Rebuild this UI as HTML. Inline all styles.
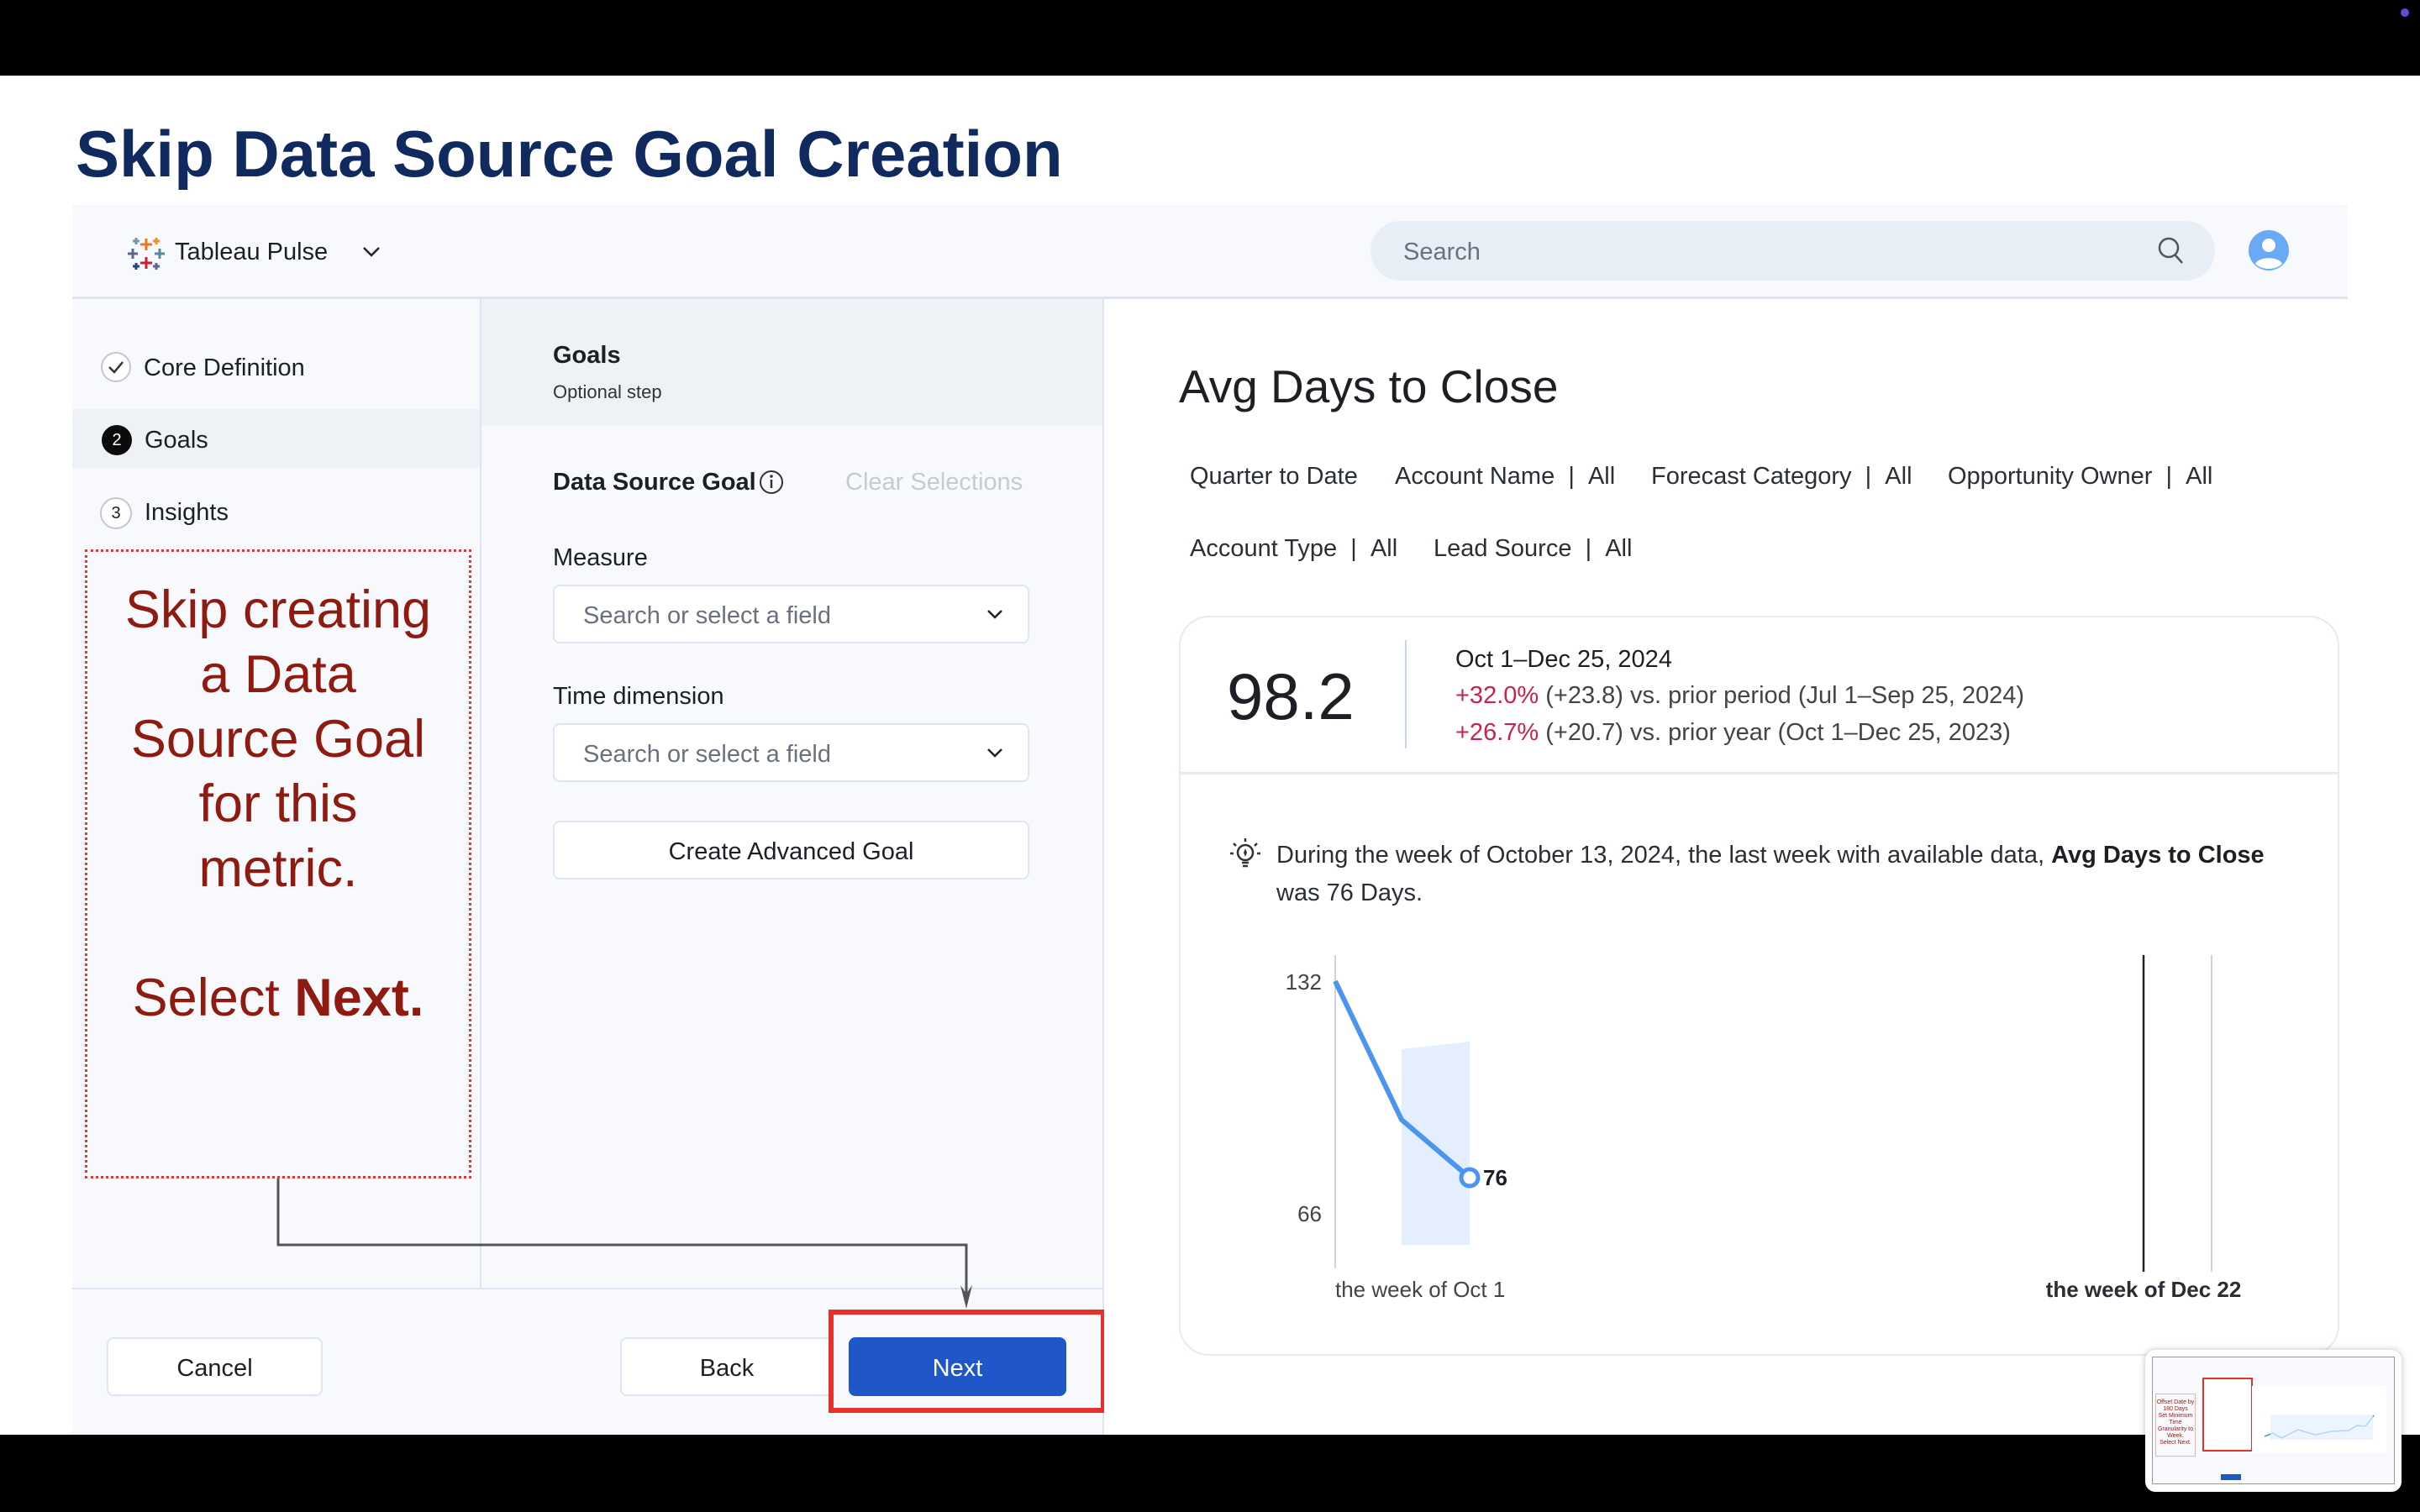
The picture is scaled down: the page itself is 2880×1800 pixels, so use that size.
<!DOCTYPE html>
<html><head><meta charset="utf-8"><style>
*{margin:0;padding:0;box-sizing:border-box}
body{width:2880px;height:1800px;background:#fff;position:relative;overflow:hidden;font-family:"Liberation Sans",sans-serif;color:#1c1f24}
.a{position:absolute;white-space:nowrap}
.btn{position:absolute;background:#fff;border:2px solid #dfe6f2;border-radius:8px;font-size:29px;display:flex;align-items:center;justify-content:center;color:#1c1f24;padding-top:4px}
.sel{position:absolute;left:658px;width:567px;height:70px;background:#fff;border:2px solid #dfe6f2;border-radius:8px;font-size:29px;color:#6b717c;padding-left:34px;line-height:70px}
.f{font-size:29px;color:#2a2e35}
</style></head><body>
<div class="a" style="left:0;top:0;width:2880px;height:90px;background:#000"></div>
<div class="a" style="left:2857px;top:10px;width:10px;height:10px;border-radius:50%;background:#5b4fd8"></div>
<div class="a" style="left:0;top:1708px;width:2880px;height:92px;background:#000"></div>
<div class="a" style="left:90px;top:138px;font-size:78px;font-weight:bold;color:#10295e">Skip Data Source Goal Creation</div>

<div class="a" style="left:86px;top:244px;width:2708px;height:1464px;background:#f8f9fd"></div>
<div class="a" style="left:86px;top:353px;width:2708px;height:3px;background:#dbe5f3"></div>
<svg class="a" style="left:152px;top:280px" width="44" height="44" viewBox="0 0 44 44">
<g stroke-width="3"><path d="M22 4v14M15 11h14" stroke="#e8762d"/><path d="M22 26v14M15 33h14" stroke="#c72037"/><path d="M6 16v12M0 22h12" stroke="#5b6591"/><path d="M38 16v12M32 22h12" stroke="#59879b"/><path d="M10 3v8M6 7h8" stroke="#7199a6"/><path d="M34 33v8M30 37h8" stroke="#5b6591"/><path d="M34 3v8M30 7h8" stroke="#eb912b"/><path d="M10 33v8M6 37h8" stroke="#1f457e"/></g></svg>
<div class="a" style="left:208px;top:284px;font-size:29px">Tableau Pulse</div>
<svg class="a" style="left:430px;top:290px" width="24" height="20"><path d="M3 5l9 9 9-9" fill="none" stroke="#222" stroke-width="2.5"/></svg>
<div class="a" style="left:1631px;top:263px;width:1005px;height:71px;border-radius:36px;background:#e8eef6"></div>
<div class="a" style="left:1670px;top:284px;font-size:29px;color:#6b717c">Search</div>
<svg class="a" style="left:2566px;top:280px" width="36" height="38"><circle cx="15" cy="15" r="11" fill="none" stroke="#555" stroke-width="2.5"/><path d="M23 24l8 9" stroke="#555" stroke-width="2.5"/></svg>
<svg class="a" style="left:2676px;top:274px" width="48" height="48"><circle cx="24" cy="24" r="24" fill="#6aa9f5"/><circle cx="24" cy="18" r="8" fill="#fff"/><path d="M8 40c4-9 28-9 32 0c-8 8-24 8-32 0z" fill="#fff"/></svg>

<div class="a" style="left:86px;top:487px;width:485px;height:70px;background:#eef1f6"></div>
<svg class="a" style="left:119px;top:418px" width="38" height="38"><circle cx="19" cy="19" r="17" fill="#fff" stroke="#c3c7cf" stroke-width="2"/><path d="M11 19l6 6 10-12" fill="none" stroke="#333" stroke-width="2.5"/></svg>
<div class="a" style="left:171px;top:422px;font-size:29px">Core Definition</div>
<div class="a" style="left:121px;top:506px;width:36px;height:36px;border-radius:50%;background:#0b0b0b;color:#fff;font-size:20px;text-align:center;line-height:36px">2</div>
<div class="a" style="left:172px;top:508px;font-size:29px">Goals</div>
<div class="a" style="left:119px;top:592px;width:38px;height:38px;border-radius:50%;border:2px solid #c3c7cf;background:#fff;font-size:20px;text-align:center;line-height:34px">3</div>
<div class="a" style="left:172px;top:594px;font-size:29px">Insights</div>
<div class="a" style="left:101px;top:654px;width:460px;height:749px;border:3px dotted #e03a2f"></div>
<div class="a" style="left:101px;top:688px;width:460px;text-align:center;font-size:63px;line-height:77px;color:#8e1a10;white-space:normal">Skip creating<br>a Data<br>Source Goal<br>for this<br>metric.<br><br>Select <b>Next.</b></div>

<div class="a" style="left:571px;top:355px;width:2px;height:1179px;background:#dbe5f3"></div>
<div class="a" style="left:1312px;top:355px;width:2px;height:1353px;background:#dbe5f3"></div>
<div class="a" style="left:573px;top:356px;width:739px;height:151px;background:#eef1f6"></div>
<div class="a" style="left:658px;top:407px;font-size:29px;font-weight:bold">Goals</div>
<div class="a" style="left:658px;top:454px;font-size:22px;color:#333">Optional step</div>
<div class="a" style="left:658px;top:558px;font-size:29px;font-weight:bold">Data Source Goal</div>
<svg class="a" style="left:902px;top:558px" width="32" height="32"><circle cx="16" cy="16" r="13" fill="none" stroke="#333" stroke-width="2"/><path d="M16 13v10" stroke="#333" stroke-width="2.5"/><circle cx="16" cy="9" r="1.8" fill="#333"/></svg>
<div class="a" style="left:1006px;top:558px;font-size:29px;color:#c5cad3">Clear Selections</div>
<div class="a" style="left:658px;top:648px;font-size:29px">Measure</div>
<div class="sel" style="top:696px">Search or select a field</div>
<svg class="a" style="left:1172px;top:722px" width="24" height="20"><path d="M4 5l8 8 8-8" fill="none" stroke="#222" stroke-width="2.5"/></svg>
<div class="a" style="left:658px;top:813px;font-size:29px">Time dimension</div>
<div class="sel" style="top:861px">Search or select a field</div>
<svg class="a" style="left:1172px;top:887px" width="24" height="20"><path d="M4 5l8 8 8-8" fill="none" stroke="#222" stroke-width="2.5"/></svg>
<div class="btn" style="left:658px;top:977px;width:567px;height:70px">Create Advanced Goal</div>

<div class="a" style="left:86px;top:1533px;width:1227px;height:2px;background:#dbe5f3"></div>
<div class="btn" style="left:127px;top:1592px;width:257px;height:70px">Cancel</div>
<div class="btn" style="left:738px;top:1592px;width:254px;height:70px">Back</div>
<div class="btn" style="left:1010px;top:1592px;width:259px;height:70px;background:#1f57c8;border-color:#1f57c8;color:#fff">Next</div>
<div class="a" style="left:986px;top:1559px;width:330px;height:123px;border:6px solid #e6302a"></div>
<svg class="a" style="left:0;top:0" width="1400" height="1600"><path d="M331 1403V1482H1150V1552" fill="none" stroke="#555" stroke-width="3"/><path d="M1143 1530L1150 1558L1157 1530L1150 1540z" fill="#555"/></svg>

<div class="a" style="left:1314px;top:356px;width:1480px;height:1352px;background:#fff"></div>
<div class="a" style="left:1403px;top:428px;font-size:55px;color:#1c1f24">Avg Days to Close</div>
<div class="a f" style="left:1416px;top:551px">Quarter to Date</div>
<div class="a f" style="left:1660px;top:551px">Account Name &nbsp;| &nbsp;All</div>
<div class="a f" style="left:1965px;top:551px">Forecast Category &nbsp;| &nbsp;All</div>
<div class="a f" style="left:2318px;top:551px">Opportunity Owner &nbsp;| &nbsp;All</div>
<div class="a f" style="left:1416px;top:637px">Account Type &nbsp;| &nbsp;All</div>
<div class="a f" style="left:1706px;top:637px">Lead Source &nbsp;| &nbsp;All</div>

<div class="a" style="left:1403px;top:733px;width:1381px;height:881px;border:2px solid #e6ebf2;border-radius:36px;background:#fff"></div>
<div class="a" style="left:1405px;top:919px;width:1377px;height:3px;background:#e3eaf4"></div>
<div class="a" style="left:1460px;top:784px;font-size:78px">98.2</div>
<div class="a" style="left:1672px;top:762px;width:2px;height:129px;background:#c7d7ee"></div>
<div class="a" style="left:1732px;top:769px;font-size:29px">Oct 1–Dec 25, 2024</div>
<div class="a" style="left:1732px;top:812px;font-size:29px;color:#444"><span style="color:#c8234a">+32.0%</span> (+23.8) vs. prior period (Jul 1–Sep 25, 2024)</div>
<div class="a" style="left:1732px;top:856px;font-size:29px;color:#444"><span style="color:#c8234a">+26.7%</span> (+20.7) vs. prior year (Oct 1–Dec 25, 2023)</div>
<svg class="a" style="left:1462px;top:996px" width="40" height="42"><g fill="none" stroke="#333" stroke-width="2.5"><circle cx="20" cy="19" r="9"/><path d="M16 31h8M17 35h6M20 2v4M6 8l3 3M34 8l-3 3M2 20h4M34 20h4"/></g><path d="M20 14l2 5-2 5-2-5z" fill="#333"/></svg>
<div class="a" style="left:1519px;top:1002px;font-size:29px;color:#2a2e35">During the week of October 13, 2024, the last week with available data, <b style="color:#1c1f24">Avg Days to Close</b></div>
<div class="a" style="left:1519px;top:1047px;font-size:29px;color:#2a2e35">was 76 Days.</div>

<svg class="a" style="left:1403px;top:1100px" width="1381" height="460">
<line x1="186" y1="37" x2="186" y2="410" stroke="#d0d4da" stroke-width="2"/>
<text x="170" y="78" font-size="26" fill="#444" text-anchor="end" font-family="Liberation Sans">132</text>
<text x="170" y="354" font-size="26" fill="#444" text-anchor="end" font-family="Liberation Sans">66</text>
<path d="M265 149L346 140V382H265z" fill="#e3efff"/>
<polyline points="186,68 265,233 346,302" fill="none" stroke="#4b94f0" stroke-width="6" stroke-linejoin="round"/>
<circle cx="346" cy="302" r="10" fill="#fff" stroke="#4b94f0" stroke-width="5"/>
<text x="362" y="311" font-size="26" font-weight="bold" fill="#1c1f24" font-family="Liberation Sans">76</text>
<line x1="1148" y1="37" x2="1148" y2="414" stroke="#222" stroke-width="2.5"/>
<line x1="1229" y1="37" x2="1229" y2="414" stroke="#d0d4da" stroke-width="2"/>
<text x="186" y="444" font-size="26" fill="#444" font-family="Liberation Sans">the week of Oct 1</text>
<text x="1148" y="444" font-size="26" fill="#2a2e35" text-anchor="middle" font-weight="bold" font-family="Liberation Sans">the week of Dec 22</text>
</svg>

<div class="a" style="left:2553px;top:1607px;width:305px;height:169px;background:#fff;border-radius:12px;box-shadow:0 0 8px rgba(0,0,0,.25)"></div>
<div class="a" style="left:2561px;top:1615px;width:289px;height:152px;border:1px solid #999;background:#f8f9fd"></div>
<div class="a" style="left:2621px;top:1640px;width:60px;height:88px;border:2px solid #e6302a;background:#fff"></div>
<div class="a" style="left:2565px;top:1659px;width:48px;height:75px;border:1px solid #f0b0a8;font-size:7px;color:#8e1a10;text-align:center;white-space:normal;line-height:8px;padding-top:6px">Offset Date by 180 Days<br>Set Minimum Time Granularity to Week.<br>Select Next.</div>
<div class="a" style="left:2643px;top:1755px;width:24px;height:7px;background:#1f57c8"></div>
<div class="a" style="left:2680px;top:1650px;width:160px;height:80px;background:#fff"></div>
<svg class="a" style="left:2690px;top:1680px" width="145" height="40"><path d="M5 30L15 26 25 32 45 22 65 28 85 24 105 23 115 17 125 18 135 5" fill="none" stroke="#4b94f0" stroke-width="1.5"/><rect x="12" y="4" width="122" height="30" fill="#e3efff" opacity=".7"/></svg>
</body></html>
